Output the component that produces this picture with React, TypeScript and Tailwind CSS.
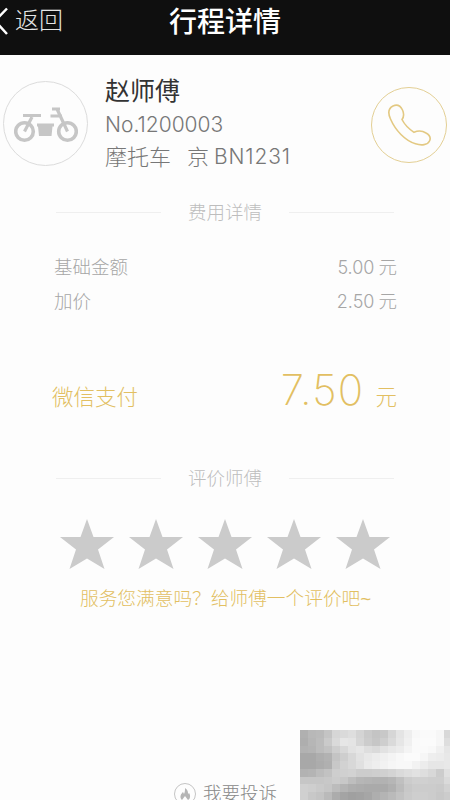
import type { ReactNode } from 'react';

const STARS = [1, 2, 3, 4, 5];

// Censored corner, one grey level per 8px block
const MOSAIC: number[][] = [
  [176, 184, 186, 196, 214, 218, 222, 212, 202, 196, 200, 214, 228, 238, 248, 250, 250, 246, 216],
  [174, 182, 188, 202, 218, 230, 228, 214, 204, 198, 206, 218, 230, 240, 250, 251, 251, 246, 222],
  [178, 180, 188, 194, 206, 216, 226, 230, 222, 218, 226, 232, 236, 244, 250, 250, 248, 240, 230],
  [168, 168, 174, 178, 196, 206, 216, 226, 232, 236, 240, 244, 248, 251, 251, 246, 238, 236, 232],
  [168, 168, 172, 176, 200, 210, 216, 224, 234, 238, 242, 246, 248, 248, 242, 236, 230, 230, 232],
  [178, 180, 188, 194, 206, 208, 210, 204, 204, 206, 208, 212, 218, 222, 226, 222, 216, 204, 224],
  [198, 198, 198, 200, 204, 200, 190, 182, 180, 178, 178, 182, 192, 204, 208, 208, 206, 206, 218],
  [208, 206, 202, 198, 188, 180, 174, 172, 170, 170, 170, 176, 188, 200, 204, 204, 204, 202, 210],
  [208, 200, 196, 186, 172, 164, 160, 162, 166, 174, 180, 186, 194, 202, 206, 206, 204, 200, 204],
];

function BikeIcon() {
  return (
    <svg viewBox="0 0 64 36" className="mt-[2px] h-[36px] w-[64px]" fill="none" stroke="#c6c6c6">
      <circle cx="10.500" cy="24.500" r="8.800" strokeWidth="3.600" />
      <circle cx="53.500" cy="24.500" r="8.800" strokeWidth="3.600" />
      <path d="M10.500 24.500 18 10M9 8.500h18M53.500 24.500 43 2M38 2h8M36.500 9h11.500" strokeWidth="3.200" />
      <path d="M23 16.500h17v3h-1.500l-1 9.500H25l-1-9.500h-1z" fill="#c6c6c6" stroke="none" />
    </svg>
  );
}

function PhoneIcon() {
  return (
    <svg viewBox="0 0 44 42" className="h-[42px] w-[44px]" fill="none" stroke="#e3c983" strokeWidth="1.6">
      <path d="M3.500 15C1 9.500 1 4.500 6 2c4-1.800 7.500 0 9.500 4 1.600 3.500 2 6-.5 9.500 2.500 5 7 9.500 12 12.800 4.500-2 8.500-1.500 12 .7 3.500 2 5 5 3.500 8-1.800 4-8 4.800-14 2.800C18 36.500 8.500 26.500 3.500 15z" />
    </svg>
  );
}

function Divider({ children }: { children: ReactNode }) {
  return (
    <div className="flex h-6 items-center justify-between px-[56px] text-[18.500px] text-[#bdbdbd]">
      <span className="h-px w-[105px] bg-[#efefef]" />
      <span className="relative top-px whitespace-nowrap">{children}</span>
      <span className="h-px w-[105px] bg-[#efefef]" />
    </div>
  );
}

function FeeRow({ label, amount }: { label: string; amount: string }) {
  return (
    <div className="flex h-[34px] items-center justify-between pl-[54px] pr-[53px] text-[18.500px] text-[#a6a6a6]">
      <span>{label}</span>
      <span className="flex items-center gap-[4px]">
        <span className="-mt-px font-['Inter'] text-[18px] font-light">{amount}</span>元
      </span>
    </div>
  );
}

export default function App() {
  return (
    <div className="relative flex h-[800px] w-[450px] flex-col overflow-hidden bg-[#fdfdfd] font-['Liberation_Sans','Noto_Sans_CJK_SC',sans-serif] font-light">
      <header className="relative flex h-[55px] shrink-0 justify-center bg-[#0f0f0f] text-white">
        <div className="absolute left-0 top-[5px] flex h-8 items-center">
          <svg viewBox="0 0 15 30" className="h-[30px] w-[15px]" fill="none" stroke="#fff" strokeWidth="2.500">
            <path d="M7 2.500-5 15 7 28" />
          </svg>
          <span className="text-[24px] leading-8 text-[#e6e6e6]">返回</span>
        </div>
        <h1 className="h-[46px] text-[28px] font-medium leading-[46px]">行程详情</h1>
      </header>

      <section className="flex h-[145px] shrink-0 pl-[3px] pr-[3px] pt-[26px]">
        <div className="flex size-[85px] items-center justify-center rounded-full border border-[#dcdcdc]">
          <BikeIcon />
        </div>
        <div className="ml-[17px] -mt-[6px] flex-1 whitespace-pre text-[22px] leading-[33px] text-[#777]">
          <p className="text-[25px] font-normal text-[#333]">赵师傅</p>
          <p className="font-['Inter'] text-[21px] font-light leading-[33px]">No.1200003</p>
          <p className="flex">
            <span>摩托车</span>
            <span className="ml-[16px]">京</span>
            <span className="-mt-px ml-[5px] font-['Inter'] text-[21px] font-light tracking-[0.04em]">BN1231</span>
          </p>
        </div>
        <div className="mt-[6px] flex size-[76px] items-center justify-center rounded-full border border-[#e3cf94]">
          <PhoneIcon />
        </div>
      </section>

      <Divider>费用详情</Divider>
      <div className="mt-[27px]">
        <FeeRow label="基础金额" amount="5.00" />
        <FeeRow label="加价" amount="2.50" />
      </div>

      <div className="mt-[39px] flex h-[60px] items-baseline justify-between pl-[52px] pr-[53px] text-[21.500px] text-[#e2bf62]">
        <span>微信支付</span>
        <span>
          <span className="mr-[11px] font-['Inter'] text-[42px] font-extralight tracking-[0.03em]">7.50</span>元
        </span>
      </div>

      <div className="mt-[48px]">
        <Divider>评价师傅</Divider>
      </div>
      <div className="mt-[29px] flex justify-between px-[60px]">
        {STARS.map((n) => (
          <svg key={n} viewBox="0 0 54 50" className="h-[50px] w-[54px]" fill="#cbcbcb">
            <path d="M27 0l6.500 18H54L38 30.500 44.500 50 27 39.500 9.500 50 16 30.500 0 18h20.500z" />
          </svg>
        ))}
      </div>
      <p className="mt-[16px] pl-[80px] text-[18.700px] leading-7 text-[#e2bf62]">服务您满意吗？给师傅一个评价吧~</p>

      <footer className="absolute left-[174px] top-[780px] flex h-7 items-center gap-[7px] text-[18.500px] text-[#888]">
        <svg viewBox="0 0 22 22" className="size-[22px]" fill="none" stroke="#c4c4c4">
          <circle cx="11" cy="11" r="10.500" />
          <path d="M8 17c-3-3-1-6 1-8l1 2c1-2 1-4 1-6 3 2 3 4 3 6l1-1c2 3 1 6-1 7l-3-4z" fill="#b5b5b5" stroke="none" />
        </svg>
        <span className="whitespace-nowrap">我要投诉</span>
      </footer>

      <div className="absolute bottom-0 right-0 grid h-[70px] w-[150px] grid-cols-[repeat(18,8px)_6px] grid-rows-9">
        {MOSAIC.flat().map((v, i) => (
          <span key={i} style={{ backgroundColor: `rgb(${v},${v},${v})` }} />
        ))}
      </div>
    </div>
  );
}
